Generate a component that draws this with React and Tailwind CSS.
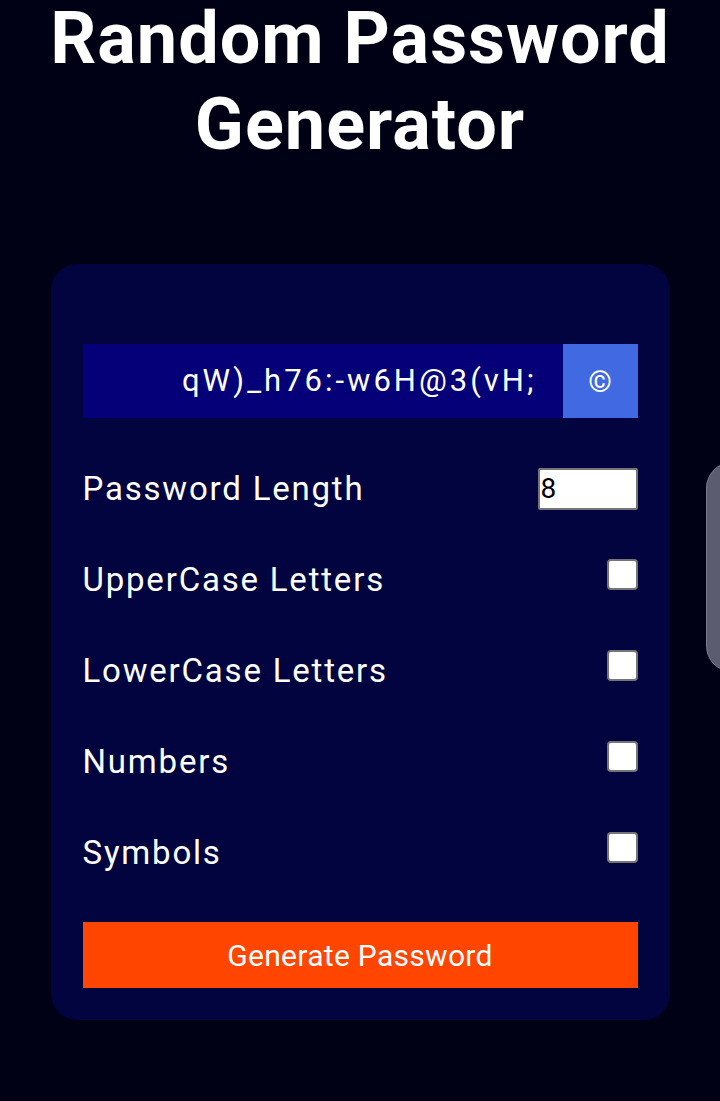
import React, { useState } from "react";

const options = ["UpperCase Letters", "LowerCase Letters", "Numbers", "Symbols"];

export default function App() {
    const [length, setLength] = useState(8);
    const [checked, setChecked] = useState({});

    return (
        <div className="relative min-h-[1101px] overflow-hidden bg-[#010116] font-['Roboto',sans-serif] text-white">
            <h1 className="-mt-[4px] text-center text-[72px] font-bold leading-[86px] tracking-[1px]">
                Random Password
                <br />
                Generator
            </h1>

            <div className="mx-auto mt-[96px] w-[619px] rounded-[26px] bg-[#01043f] px-[32px] pt-[80px] pb-[32px]">
                <div className="flex h-[74px]">
                    <div className="flex flex-1 items-center justify-end bg-[#050078] pr-[26px] text-[31px] tracking-[3px]">
                        qW)_h76:-w6H@3(vH;
                    </div>
                    <button className="flex w-[75px] items-center justify-center bg-[#4169e1] text-[30px]">
                        ©
                    </button>
                </div>

                <div className="mt-[25px] flex h-[91px] items-center justify-between">
                    <span className="text-[33px] tracking-[1.8px]">Password Length</span>
                    <input
                        type="number"
                        value={length}
                        onChange={(e) => setLength(e.target.value)}
                        className="h-[42px] w-[100px] rounded-[2px] border-2 border-[#767676] bg-white px-[1px] text-[28px] text-black"
                    />
                </div>

                {options.map((label) => (
                    <div
                        key={label}
                        className="flex h-[91px] items-center justify-between"
                    >
                        <span className="text-[33px] tracking-[1.8px]">{label}</span>
                        <input
                            type="checkbox"
                            checked={!!checked[label]}
                            onChange={() =>
                                setChecked({ ...checked, [label]: !checked[label] })
                            }
                            className="mb-[10px] h-[31px] w-[31px] appearance-none rounded-[4px] border-2 border-[#767676] bg-white"
                        />
                    </div>
                ))}

                <button className="mt-[24px] h-[66px] w-full bg-[#ff4500] text-[30px] tracking-[0.3px]">
                    Generate Password
                </button>
            </div>

            <div className="absolute top-[462px] left-[706px] h-[210px] w-[40px] rounded-l-[26px] border border-[#7a7a8c] bg-[#5c5c70]" />
        </div>
    );
}
